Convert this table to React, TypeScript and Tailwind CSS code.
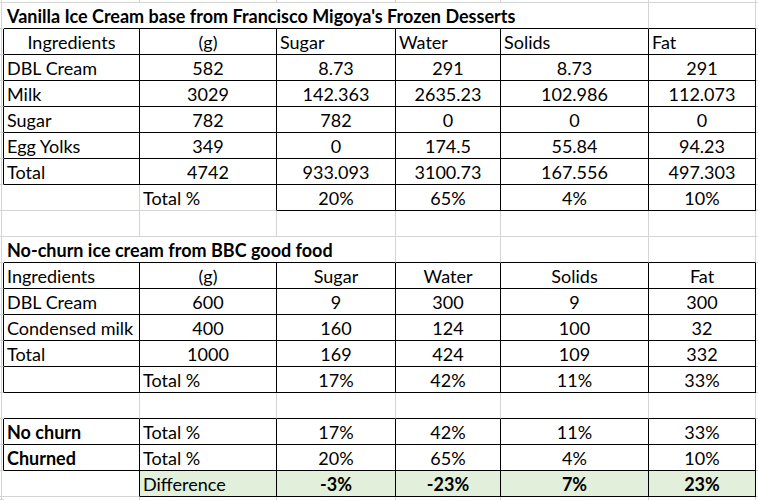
import clsx from "clsx"

type Cell = { t?: string; a?: "l" | "c"; b?: boolean; box?: boolean; fill?: boolean; span?: number }

const L = (t: string, extra: Partial<Cell> = {}): Cell => ({ t, a: "l", box: true, ...extra })
const C = (t: string, extra: Partial<Cell> = {}): Cell => ({ t, a: "c", box: true, ...extra })
const E: Cell = {}
const EB: Cell = { box: true }

const nums = (vals: string[], extra: Partial<Cell> = {}) => vals.map((v) => C(v, extra))

const rows: Cell[][] = [
  [{ t: "Vanilla Ice Cream base from Francisco Migoya's Frozen Desserts", a: "l", b: true, span: 5 }, E],
  [C("Ingredients"), C("(g)"), L("Sugar"), L("Water"), L("Solids"), L("Fat")],
  [L("DBL Cream"), ...nums(["582", "8.73", "291", "8.73", "291"])],
  [L("Milk"), ...nums(["3029", "142.363", "2635.23", "102.986", "112.073"])],
  [L("Sugar"), ...nums(["782", "782", "0", "0", "0"])],
  [L("Egg Yolks"), ...nums(["349", "0", "174.5", "55.84", "94.23"])],
  [L("Total"), ...nums(["4742", "933.093", "3100.73", "167.556", "497.303"])],
  [E, { t: "Total %", a: "l" }, ...nums(["20%", "65%", "4%", "10%"])],
  [E, E, E, E, E, E],
  [{ t: "No-churn ice cream from BBC good food", a: "l", b: true, span: 3 }, E, E, E],
  [L("Ingredients"), C("(g)"), C("Sugar"), C("Water"), C("Solids"), C("Fat")],
  [L("DBL Cream"), ...nums(["600", "9", "300", "9", "300"])],
  [L("Condensed milk"), ...nums(["400", "160", "124", "100", "32"])],
  [L("Total"), ...nums(["1000", "169", "424", "109", "332"])],
  [EB, L("Total %"), ...nums(["17%", "42%", "11%", "33%"])],
  [E, E, E, E, E, E],
  [L("No churn", { b: true }), L("Total %"), ...nums(["17%", "42%", "11%", "33%"])],
  [L("Churned", { b: true }), L("Total %"), ...nums(["20%", "65%", "4%", "10%"])],
  [E, L("Difference", { fill: true }), ...nums(["-3%", "-23%", "7%", "23%"], { b: true, fill: true })],
]

const spanClass: Record<number, string> = { 1: "", 3: "col-span-3", 5: "col-span-5" }

// box flags per sheet column, spans expanded
const boxes = rows.map((row) => row.flatMap((c) => Array(c.span ?? 1).fill(!!c.box) as boolean[]))
const isBox = (r: number, c: number) => !!boxes[r]?.[c]

const grid = "border-[#d4d4d4]"

function Gutter({ dark }: { dark?: boolean }) {
  return (
    <div className={clsx("flex border-b", grid, dark && "border-r border-r-black")}>
      <div className="ml-px w-px bg-[#d4d4d4]" />
    </div>
  )
}

function Strip({ last }: { last?: boolean }) {
  return (
    <>
      <Gutter />
      {[0, 1, 2, 3, 4, 5].map((c) => (
        <div key={c} className={clsx("border-r", grid, !last && "border-b")} />
      ))}
      <div className={clsx(grid, !last && "border-b")} />
    </>
  )
}

export default function App() {
  return (
    <div className="h-[500px] w-[758px] overflow-hidden bg-white font-['Lato',sans-serif] text-[18px] text-black">
      <div className="grid grid-cols-[4px_136px_137px_119px_105px_148px_107px_2px] grid-rows-[3px_repeat(19,26px)_3px]">
        <Strip />
        {rows.map((row, r) => {
          let col = 0
          return (
            <div key={r} className="contents">
              <Gutter dark={isBox(r, 0)} />
              {row.map((cell, i) => {
                const span = cell.span ?? 1
                const start = col
                const end = col + span - 1
                col += span
                const right = isBox(r, end) || isBox(r, end + 1)
                const bottom = isBox(r, start) || isBox(r + 1, start)
                return (
                  <div
                    key={i}
                    className={clsx(
                      "whitespace-nowrap border-r border-b px-[3px] pt-px leading-[25px]",
                      span > 1 ? "overflow-visible" : "overflow-hidden",
                      right ? "border-r-black" : "border-r-[#d4d4d4]",
                      bottom ? "border-b-black" : "border-b-[#d4d4d4]",
                      cell.a === "c" ? "text-center" : "text-left",
                      cell.b && "font-bold",
                      cell.fill && "bg-[#e2efda]",
                      spanClass[span],
                    )}
                  >
                    {cell.t}
                  </div>
                )
              })}
              <div className={clsx("border-b", grid)} />
            </div>
          )
        })}
        <Strip last />
      </div>
    </div>
  )
}
